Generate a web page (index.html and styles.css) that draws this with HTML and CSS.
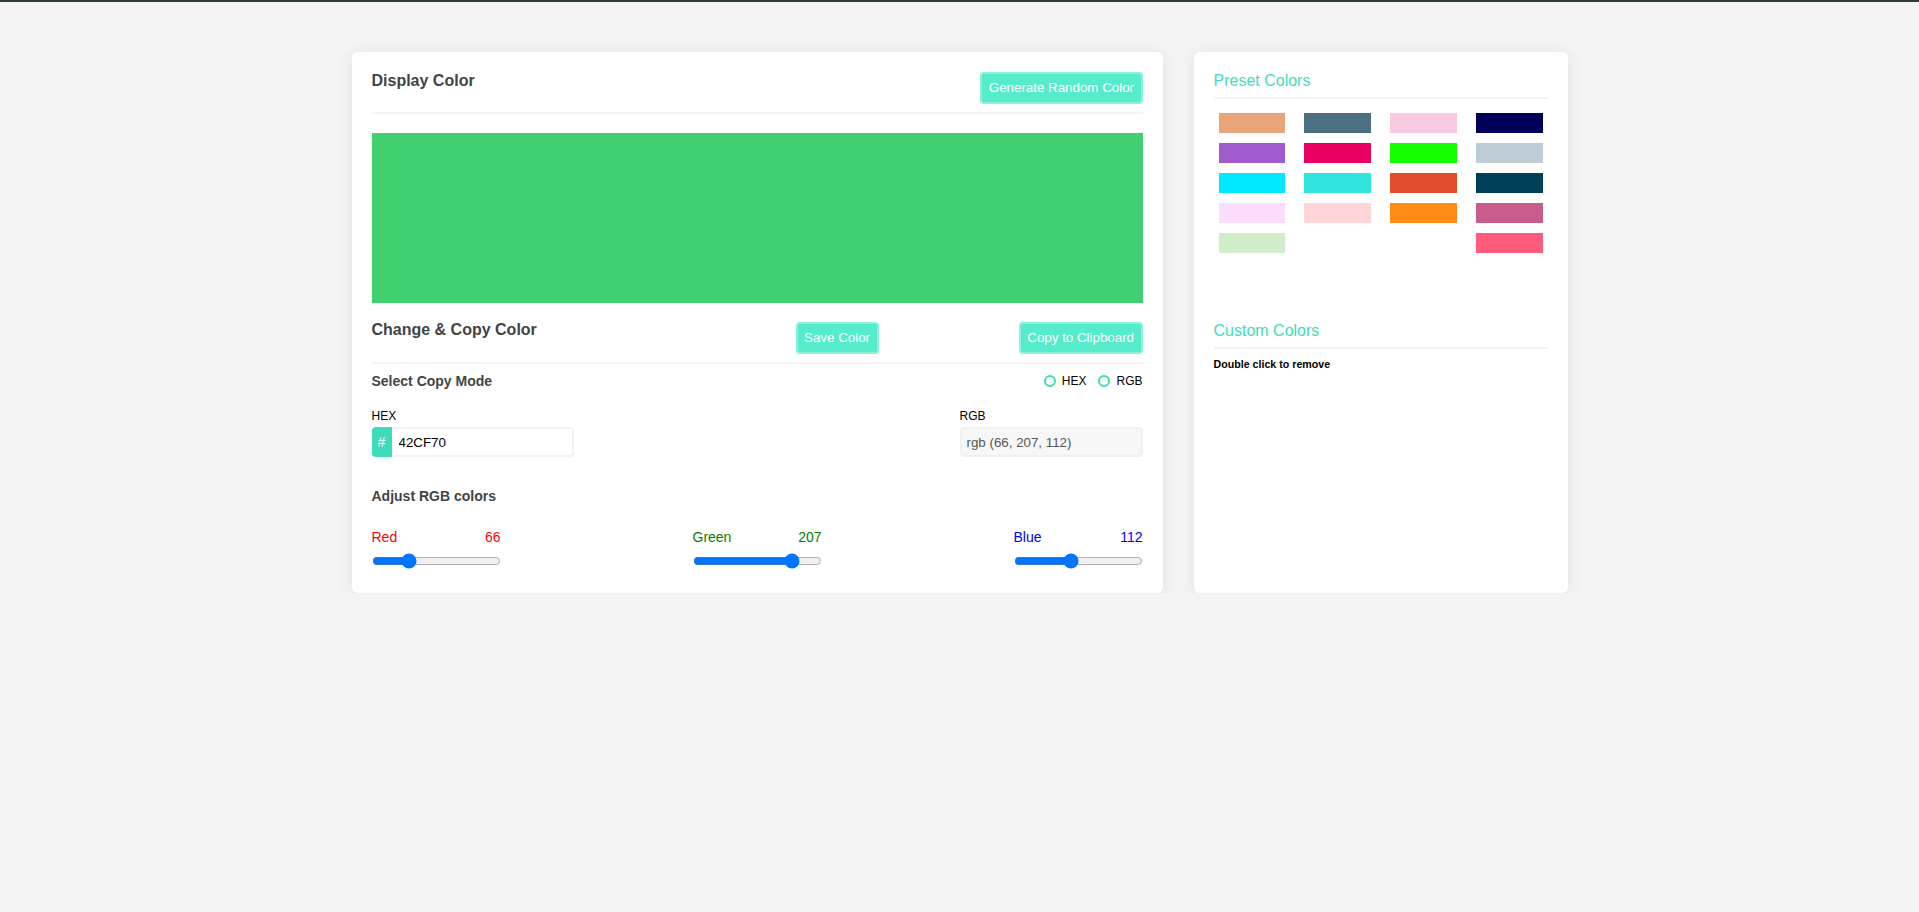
FILE: index.html
```html
<!DOCTYPE html>
<html lang="en">
<head>
<meta charset="utf-8">
<title>Color Picker</title>
<link rel="stylesheet" href="styles.css">
</head>
<body>
<div class="topbar"></div>
<main class="container">
  <section class="card main-card">
    <div class="card-head">
      <h2 class="title">Display Color</h2>
      <button class="btn">Generate Random Color</button>
    </div>
    <div class="divider"></div>
    <div class="display" style="background:#42CF70"></div>
    <div class="copy-head">
      <h2 class="title">Change &amp; Copy Color</h2>
      <div class="save-cell"><button class="btn">Save Color</button></div>
      <div class="copy-cell"><button class="btn">Copy to Clipboard</button></div>
    </div>
    <div class="divider"></div>
    <div class="mode-row">
      <span class="subtitle">Select Copy Mode</span>
      <div class="radios">
        <label class="radio"><span class="circle"></span>HEX</label>
        <label class="radio"><span class="circle"></span>RGB</label>
      </div>
    </div>
    <div class="inputs-row">
      <div class="field">
        <span class="field-label">HEX</span>
        <div class="hex-input">
          <span class="hash">#</span>
          <input class="hex-text" type="text" value="42CF70">
        </div>
      </div>
      <div class="field">
        <span class="field-label">RGB</span>
        <input class="rgb-text" type="text" value="rgb (66, 207, 112)" readonly>
      </div>
    </div>
    <h3 class="subtitle adjust">Adjust RGB colors</h3>
    <div class="sliders">
      <div class="slider red">
        <div class="slider-labels"><span>Red</span><span>66</span></div>
        <input type="range" min="0" max="255" value="66">
      </div>
      <div class="slider green">
        <div class="slider-labels"><span>Green</span><span>207</span></div>
        <input type="range" min="0" max="255" value="207">
      </div>
      <div class="slider blue">
        <div class="slider-labels"><span>Blue</span><span>112</span></div>
        <input type="range" min="0" max="255" value="112">
      </div>
    </div>
  </section>
  <aside class="card side-card">
    <h2 class="side-title">Preset Colors</h2>
    <div class="divider"></div>
    <div class="swatches">
      <div class="swatch" style="background:#E9A47A"></div>
      <div class="swatch" style="background:#4D6F82"></div>
      <div class="swatch" style="background:#F7C9E2"></div>
      <div class="swatch" style="background:#00005A"></div>
      <div class="swatch" style="background:#A25BCF"></div>
      <div class="swatch" style="background:#E90062"></div>
      <div class="swatch" style="background:#14FF00"></div>
      <div class="swatch" style="background:#BDCDD6"></div>
      <div class="swatch" style="background:#00E8FF"></div>
      <div class="swatch" style="background:#2FE3DE"></div>
      <div class="swatch" style="background:#E14E2C"></div>
      <div class="swatch" style="background:#003F58"></div>
      <div class="swatch" style="background:#FCDCFD"></div>
      <div class="swatch" style="background:#FDD5D6"></div>
      <div class="swatch" style="background:#FF8B14"></div>
      <div class="swatch" style="background:#C75C8D"></div>
      <div class="swatch" style="background:#D1ECC8"></div>
      <div class="swatch" style="background:#FF5C7D"></div>
    </div>
    <h2 class="side-title custom">Custom Colors</h2>
    <div class="divider"></div>
    <p class="hint">Double click to remove</p>
  </aside>
</main>
</body>
</html>
```

FILE: styles.css
```css
* {
  box-sizing: border-box;
}

html, body {
  margin: 0;
  padding: 0;
}

body {
  background: #f4f4f4;
  font-family: "Liberation Sans", Arial, sans-serif;
  color: #000;
}

.topbar {
  height: 2px;
  background: #2d3b30;
}

.container {
  width: 1216px;
  margin: 50px auto 0;
  display: flex;
  gap: 31px;
  align-items: stretch;
}

.card {
  background: #fff;
  border-radius: 6px;
  box-shadow: 0 2px 16px rgba(0, 0, 0, 0.09);
}

.main-card {
  width: 811px;
  padding: 20px 20px 24px;
}

.side-card {
  width: 374px;
  padding: 20px;
}

.card-head {
  display: flex;
  justify-content: space-between;
  align-items: flex-start;
}

.title {
  margin: 0;
  font-size: 16px;
  line-height: 18px;
  font-weight: bold;
  color: #444;
}

.btn {
  height: 32px;
  padding: 0 6.5px;
  border: 2px solid #8df0da;
  border-radius: 4px;
  background: #55ebcb;
  color: #fff;
  font-family: "Liberation Sans", Arial, sans-serif;
  font-size: 13.333px;
  line-height: 1;
  cursor: pointer;
}

.divider {
  height: 2px;
  background: #f3f3f3;
  margin-top: 8px;
}

.display {
  margin-top: 19px;
  height: 170px;
}

.copy-head {
  margin-top: 19px;
  display: grid;
  grid-template-columns: 1fr 1fr 1fr;
  align-items: start;
}

.copy-head .title {
  margin-top: -1px;
}

.save-cell {
  justify-self: end;
  margin-right: 7px;
}

.copy-cell {
  justify-self: end;
}

.mode-row {
  margin-top: 9px;
  display: flex;
  justify-content: space-between;
  align-items: center;
  height: 16px;
}

.subtitle {
  margin: 0;
  font-size: 14px;
  line-height: 16px;
  font-weight: bold;
  color: #444;
}

.radios {
  display: flex;
  gap: 12px;
}

.radio {
  display: flex;
  align-items: center;
  gap: 6px;
  font-size: 12px;
  line-height: 14px;
}

.circle {
  width: 12px;
  height: 12px;
  border: 2px solid #3ddbb9;
  border-radius: 50%;
}

.inputs-row {
  margin-top: 20px;
  display: flex;
  justify-content: space-between;
}

.field {
  display: flex;
  flex-direction: column;
  gap: 4px;
}

.field-label {
  font-size: 12px;
  line-height: 14px;
}

.hex-input {
  display: flex;
  width: 202px;
  height: 30px;
}

.hash {
  width: 20px;
  height: 30px;
  background: #3ddbb9;
  color: #fff;
  border-radius: 4px 0 0 4px;
  font-size: 14px;
  display: flex;
  align-items: center;
  justify-content: center;
}

.hex-text {
  flex: 1;
  min-width: 0;
  height: 30px;
  border: 2px solid #f2f2f2;
  border-left: none;
  border-radius: 0 4px 4px 0;
  padding: 0 7px;
  font-family: "Liberation Sans", Arial, sans-serif;
  font-size: 13.333px;
  color: #000;
  outline: none;
}

.rgb-text {
  width: 183px;
  height: 30px;
  border: 2px solid #f0f0f0;
  border-radius: 4px;
  background: #f7f7f7;
  padding: 0 5px;
  font-family: "Liberation Sans", Arial, sans-serif;
  font-size: 13.333px;
  color: #555;
  outline: none;
}

.adjust {
  margin-top: 31px;
}

.sliders {
  margin-top: 25px;
  display: flex;
  justify-content: space-between;
}

.slider {
  width: 129px;
}

.slider-labels {
  display: flex;
  justify-content: space-between;
  font-size: 14px;
  line-height: 16px;
}

.slider input[type="range"] {
  display: block;
  width: 129px;
  height: 16px;
  margin: 8px 0 0;
}

.red .slider-labels { color: #f00; }
.green .slider-labels { color: #008000; }
.blue .slider-labels { color: #00f; }

.side-title {
  margin: 0;
  font-size: 16px;
  line-height: 18px;
  font-weight: normal;
  color: #3fdcb8;
}

.side-card .divider {
  margin-top: 7px;
}

.swatches {
  margin-top: 9px;
  display: flex;
  flex-wrap: wrap;
  justify-content: space-between;
}

.swatch {
  width: 20%;
  height: 20px;
  margin: 5px;
}

.custom {
  margin-top: 64px;
}

.hint {
  margin: 9px 0 0;
  font-size: 10.67px;
  line-height: 12px;
  font-weight: bold;
}
```
